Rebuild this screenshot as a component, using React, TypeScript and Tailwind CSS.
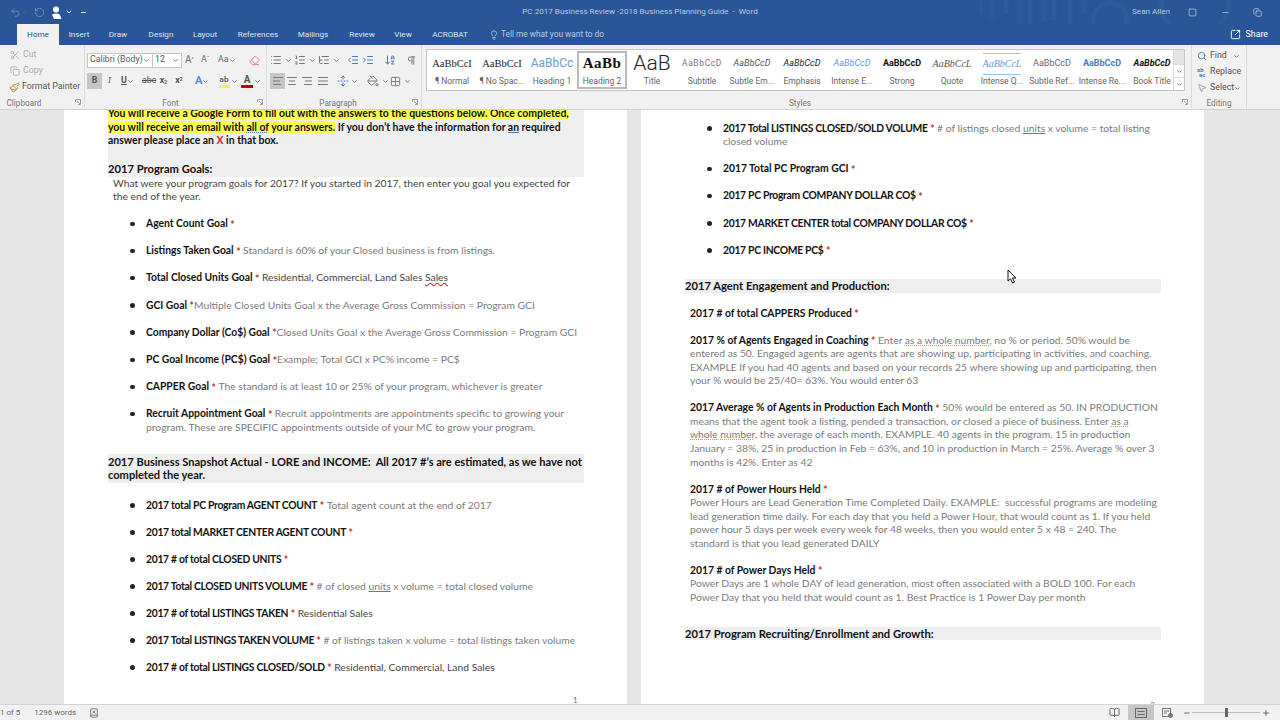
import type { ReactNode } from "react";
import {
  AlignCenter,
  AlignJustify,
  AlignLeft,
  AlignRight,
  ArrowDownAZ,
  BookOpen,
  BookX,
  ChevronDown,
  Copy,
  Eraser,
  Grid2x2,
  IndentDecrease,
  IndentIncrease,
  Lightbulb,
  List,
  ListOrdered,
  ListTree,
  Minus,
  MousePointer2,
  PaintBucket,
  Paintbrush,
  Pilcrow,
  Plus,
  RotateCcw,
  Scissors,
  Search,
  SquareArrowOutUpRight,
  Square,
  Undo2,
  UnfoldVertical,
} from "lucide-react";

const Star = () => <span className="relative top-[1.5px] text-[#c0392b]"> *</span>;
const Note = ({ children }: { children: ReactNode }) => <span className="font-normal text-[#7b7b7b]">{children}</span>;
const Dark = ({ children }: { children: ReactNode }) => <span className="font-normal text-[#444]">{children}</span>;
const Caps = ({ children }: { children: ReactNode }) => <span className="tracking-[-0.28px]">{children}</span>;

function Bullet({ mt = "mt-[13.6px]", children }: { mt?: string; children: ReactNode }) {
  return (
    <div className={`relative ml-[38px] whitespace-nowrap font-bold ${mt}`}>
      <span className="absolute left-[-16px] top-[4.5px] h-[4.5px] w-[4.5px] rounded-full bg-[#222]" />
      {children}
    </div>
  );
}

const Caret = () => <ChevronDown size={7} strokeWidth={3} className="text-[#666]" />;

function Tab({ className, children }: { className: string; children?: ReactNode }) {
  return <div className={`flex items-center justify-center ${className}`}>{children}</div>;
}

function Style({ sample, label, className, selected }: { sample: string; label: string; className: string; selected?: boolean }) {
  return (
    <div className={`flex h-[38px] w-[50px] shrink-0 flex-col items-center overflow-hidden border-[2px] ${selected ? "border-[#b9b9b9]" : "border-transparent"}`}>
      <div className={`flex h-[22px] items-center whitespace-nowrap ${className}`}>{sample}</div>
      <div className="whitespace-nowrap text-[8.5px] leading-[12px] text-[#666]">{label}</div>
    </div>
  );
}

function GroupLabel({ children, className = "right-0" }: { children: ReactNode; className?: string }) {
  return <div className={`absolute bottom-[-1px] left-0 text-center text-[8.2px] leading-[12px] text-[#777] ${className}`}>{children}</div>;
}

const Launcher = () => (
  <svg className="absolute bottom-[3px] right-[3px]" width="6" height="6" viewBox="0 0 6 6" fill="none" stroke="#888" strokeWidth="0.8">
    <path d="M0.500 3V0.500H5.500V5.500H3M2 2l3 3" />
  </svg>
);

export default function App() {
  return (
    <div className="flex h-[720px] w-[1280px] flex-col overflow-hidden bg-[#e6e6e6] font-['Lato',sans-serif] text-[10.32px] leading-[13.6px] text-[#111]">
      {/* title bar */}
      <div className="relative grid h-[24px] shrink-0 grid-cols-[1fr_auto_1fr] items-center bg-[#2a5596] font-['Roboto',sans-serif] text-[8.1px] text-[#b9cbe3]">
        <svg className="absolute right-[40px] top-0" width="260" height="45" viewBox="0 0 260 45" fill="none" stroke="#2e5b9d" strokeWidth="5">
          <circle cx="130" cy="20" r="17" />
          <circle cx="215" cy="2" r="34" />
          <path d="M0 0v14M12 0v18M26 0v14M40 0v24M50 0v26M64 0v22M74 0v20M90 0v26M104 0v14" />
        </svg>
        <div className="relative flex items-center">
          <div className="flex items-center text-[#6f8fbd]">
            <Undo2 size={11} className="ml-[10px]" />
            <Caret />
            <RotateCcw size={11} className="ml-[6px]" />
          </div>
          <div className="ml-[6px] flex items-center text-white">
            <svg width="12" height="13" viewBox="0 0 12 13" fill="currentColor"><circle cx="5" cy="3.500" r="3" /><path d="M1 9c1-2 7-2 8 0l1.500 4H3z" /></svg>
            <ChevronDown size={8} strokeWidth={3} className="ml-[2px]" />
            <Minus size={7} strokeWidth={3} className="ml-[7px]" />
          </div>
        </div>
        <div className="relative whitespace-nowrap">PC 2017 Business Review -2018 Business Planning Guide&nbsp; -&nbsp; Word</div>
        <div className="relative flex items-center justify-end pr-[18px]">
          <span className="whitespace-nowrap">Sean Allen</span>
          <Square size={9} className="ml-[18px]" />
          <Minus size={9} className="ml-[24px]" />
          <Copy size={9} className="ml-[23px]" />
        </div>
      </div>

      {/* tabs */}
      <div className="relative flex h-[21px] shrink-0 items-stretch bg-[#2a5596] font-['Roboto',sans-serif] text-[8.1px] text-[#dbe5f2]">
        <Tab className="w-[17px]" />
        <Tab className="w-[42px] bg-[#f1f1f1] text-[#2a5596]">Home</Tab>
        <Tab className="w-[40px]">Insert</Tab>
        <Tab className="w-[38px]">Draw</Tab>
        <Tab className="w-[48px]">Design</Tab>
        <Tab className="w-[40px]">Layout</Tab>
        <Tab className="w-[66px]">References</Tab>
        <Tab className="w-[44px]">Mailings</Tab>
        <Tab className="w-[54px]">Review</Tab>
        <Tab className="w-[28px]">View</Tab>
        <Tab className="w-[66px]">ACROBAT</Tab>
        <div className="ml-[6px] flex items-center gap-[2px] text-[8.3px] text-[#b9cbe3]">
          <Lightbulb size={10} />
          Tell me what you want to do
        </div>
        <div className="ml-auto mr-[12px] flex items-center gap-[5px] text-[8.8px] text-white">
          <SquareArrowOutUpRight size={11} />
          Share
        </div>
      </div>

      {/* ribbon */}
      <div className="flex h-[65px] shrink-0 border-b border-[#d0d0d0] bg-[#f1f1f1] pb-[1px] font-['Roboto',sans-serif] text-[8.8px] text-[#666]">
        <div className="relative w-[85px] shrink-0 border-r border-[#dcdcdc]">
          <div className="flex h-[16px] items-center pl-[10px] pt-[4px] text-[#aaa]"><Scissors size={10} className="mr-[3px]" />Cut</div>
          <div className="flex h-[16px] items-center pl-[10px] pt-[4px] text-[#aaa]"><Copy size={10} className="mr-[3px]" />Copy</div>
          <div className="flex h-[16px] items-center whitespace-nowrap pl-[9px] pt-[4px] text-[#555]"><Paintbrush size={11} className="mr-[2px] text-[#b8893a]" />Format Painter</div>
          <GroupLabel className="right-[36px]">Clipboard</GroupLabel>
          <Launcher />
        </div>

        <div className="relative w-[182px] shrink-0 border-r border-[#dcdcdc]">
          <div className="ml-[2px] mt-[7px] flex h-[16px] items-center">
            <div className="flex h-[15px] w-[66px] items-center justify-between border border-[#c6c6c6] bg-white px-[2px] text-[#555]">Calibri (Body)<Caret /></div>
            <div className="flex h-[15px] w-[29px] items-center justify-between border border-l-0 border-[#c6c6c6] bg-white px-[2px] text-[#555]">12<Caret /></div>
            <div className="w-[15px] pl-[3px] text-[10px]">A<sup className="text-[5px]">^</sup></div>
            <div className="w-[15px] pl-[4px] text-[9px]">A<sup className="text-[5px]">ˇ</sup></div>
            <div className="ml-[6px] flex w-[22px] items-center">Aa<Caret /></div>
            <Eraser size={11} className="ml-[9px] text-[#d97a8f]" />
          </div>
          <div className="ml-[2px] mt-[5px] flex h-[16px] items-center font-bold text-[#555]">
            <div className="flex h-[16px] w-[15px] items-center justify-center bg-[#c6c6c6]">B</div>
            <div className="w-[15px] text-center font-serif font-normal italic">I</div>
            <div className="flex w-[25px] items-center pl-[4px] underline">U<Caret /></div>
            <div className="w-[14px] text-center font-normal line-through">abc</div>
            <div className="w-[15px] text-center">x<sub className="text-[5px]">2</sub></div>
            <div className="w-[16px] text-center">x<sup className="text-[5px]">2</sup></div>
            <div className="ml-[8px] flex w-[22px] items-center text-[11px] text-[#5b8fd0]">A<Caret /></div>
            <div className="flex w-[14px] flex-col items-center"><span className="h-[10px] text-[8px] leading-[10px] text-[#666]">ab</span><span className="h-[3px] w-[11px] bg-[#f5f050]" /></div>
            <span className="w-[9px]"><Caret /></span>
            <div className="flex w-[14px] flex-col items-center"><span className="h-[10px] text-[10px] leading-[10px] text-[#555]">A</span><span className="h-[3px] w-[12px] bg-[#c00000]" /></div>
            <Caret />
          </div>
          <GroupLabel className="right-[10px]">Font</GroupLabel>
          <Launcher />
        </div>

        <div className="relative w-[155px] shrink-0 border-r border-[#dcdcdc]">
          <div className="ml-[3px] mt-[7px] flex h-[16px] items-center text-[#777]">
            <List size={12} /><span className="w-[12px] pl-[3px]"><Caret /></span>
            <ListOrdered size={12} /><span className="w-[12px] pl-[3px]"><Caret /></span>
            <ListTree size={12} /><span className="w-[17px] pl-[3px]"><Caret /></span>
            <IndentDecrease size={12} className="text-[#4a7ebb]" />
            <IndentIncrease size={12} className="ml-[3px] text-[#4a7ebb]" />
            <ArrowDownAZ size={12} className="ml-[10px] text-[#4a7ebb]" />
            <Pilcrow size={11} className="ml-[10px]" />
          </div>
          <div className="ml-[3px] mt-[5px] flex h-[16px] items-center text-[#777]">
            <div className="flex h-[16px] w-[15px] items-center justify-center bg-[#c6c6c6]"><AlignLeft size={12} /></div>
            <AlignCenter size={12} className="ml-[1px]" />
            <AlignRight size={12} className="ml-[3px]" />
            <AlignJustify size={12} className="ml-[4px]" />
            <UnfoldVertical size={12} className="ml-[8px] text-[#4a7ebb]" /><span className="w-[18px] pl-[2px]"><Caret /></span>
            <PaintBucket size={12} /><span className="w-[11px] pl-[3px]"><Caret /></span>
            <Grid2x2 size={11} /><span className="pl-[3px]"><Caret /></span>
          </div>
          <GroupLabel className="right-[12px]">Paragraph</GroupLabel>
          <Launcher />
        </div>

        <div className="relative w-[770px] shrink-0 border-r border-[#dcdcdc]">
          <div className="ml-[4px] mt-[4px] flex h-[42px] w-[759px] border border-[#c6c6c6] bg-white">
            <div className="flex w-[746px] items-center">
              <Style sample="AaBbCcI" label="¶ Normal" className="font-['Liberation_Serif',serif] text-[10.5px] text-[#222]" />
              <Style sample="AaBbCcI" label="¶ No Spac..." className="font-['Liberation_Serif',serif] text-[10.5px] text-[#222]" />
              <Style sample="AaBbCc" label="Heading 1" className="text-[12px] text-[#6d9bcf]" />
              <Style sample="AaBb" label="Heading 2" className="font-['Liberation_Serif',serif] text-[15px] font-bold tracking-[0.5px] text-[#111]" selected />
              <Style sample="AaB" label="Title" className="pb-[2px] text-[21px] font-light leading-[20px] text-[#222]" />
              <Style sample="AaBbCcD" label="Subtitle" className="text-[8.5px] tracking-[0.6px] text-[#777]" />
              <Style sample="AaBbCcD" label="Subtle Em..." className="text-[9px] italic text-[#555]" />
              <Style sample="AaBbCcD" label="Emphasis" className="text-[9px] italic text-[#222]" />
              <Style sample="AaBbCcD" label="Intense E..." className="text-[9px] italic text-[#5b9bd5]" />
              <Style sample="AaBbCcD" label="Strong" className="text-[9px] font-bold text-[#111]" />
              <Style sample="AaBbCcL" label="Quote" className="font-['Liberation_Serif',serif] text-[10px] italic text-[#555]" />
              <Style sample="AaBbCcL" label="Intense Q..." className="border-y border-[#9dc3e6] font-['Liberation_Serif',serif] text-[10px] italic text-[#5b9bd5]" />
              <Style sample="AaBbCcD" label="Subtle Ref..." className="text-[9px] text-[#666]" />
              <Style sample="AaBbCcD" label="Intense Re..." className="text-[9px] font-bold text-[#4a7ebb]" />
              <Style sample="AaBbCcD" label="Book Title" className="text-[9px] font-bold italic text-[#111]" />
            </div>
            <div className="flex w-[12px] flex-col border-l border-[#d8d8d8] text-[#666]">
              <div className="flex h-[14px] items-center justify-center bg-[#e4e4e4]" />
              <div className="flex h-[14px] items-center justify-center border-y border-[#d8d8d8]"><Caret /></div>
              <div className="flex h-[12px] items-center justify-center"><Caret /></div>
            </div>
          </div>
          <GroupLabel className="right-[13px]">Styles</GroupLabel>
          <Launcher />
        </div>

        <div className="relative w-[55px] shrink-0 border-r border-[#dcdcdc]">
          <div className="mt-[3px] flex h-[16px] items-center whitespace-nowrap pl-[5px] text-[#555]"><Search size={10} className="mr-[3px] text-[#4a7ebb]" />Find<span className="ml-[6px]"><Caret /></span></div>
          <div className="flex h-[16px] items-center whitespace-nowrap pl-[5px] text-[#555]">
            <span className="mr-[3px] flex w-[10px] flex-col text-[6px] font-bold leading-[5px] text-[#4a7ebb]"><span>ab</span><span className="pl-[2px]">ac</span></span>
            Replace
          </div>
          <div className="flex h-[16px] items-center whitespace-nowrap pl-[5px] text-[#555]"><MousePointer2 size={10} className="mr-[3px] text-[#999]" />Select<Caret /></div>
          <GroupLabel>Editing</GroupLabel>
        </div>
      </div>

      {/* document */}
      <div className="relative flex min-h-0 flex-1 gap-[14px] overflow-hidden pl-[64px]">
        <div className="relative h-full w-[563px] shrink-0 overflow-hidden bg-white pl-[44px] pr-[43px]">
          <div className="-mt-[3px] bg-[#eeeeee] font-bold">
            <div className="whitespace-nowrap text-[10.45px]">
              <span className="bg-[#ffff4d]">You will receive a Google Form to fill out with the answers to the questions below. Once completed,</span>
              <br />
              <span className="bg-[#ffff4d]">you will receive an email with <span className="underline decoration-[#4a7ebb] decoration-dotted">all of</span> your answers.</span> If you don’t have the information for <span className="underline decoration-[#4a7ebb]">an</span> required
              <br />
              answer please place an <span className="text-[#e02020]">X</span> in that box.
            </div>
            <div className="mt-[14.5px] pb-[1px] text-[11.2px]">2017 Program Goals:</div>
          </div>
          <div className="ml-[5px] whitespace-nowrap text-[#444]">
            What were your program goals for 2017? If you started in 2017, then enter you goal you expected for
            <br />
            the end of the year.
          </div>
          <Bullet mt="mt-[13px]">Agent Count Goal<Star /></Bullet>
          <Bullet>Listings Taken Goal<Star /> <Note>Standard is 60% of your Closed business is from listings.</Note></Bullet>
          <Bullet>Total Closed Units Goal<Star /> <Dark>Residential, Commercial, Land Sales <span className="underline decoration-[#e02020] decoration-wavy">Sales</span></Dark></Bullet>
          <Bullet>GCI Goal<Star /><Note>Multiple Closed Units Goal x the Average Gross Commission = Program GCI</Note></Bullet>
          <Bullet>Company Dollar (Co$) Goal<Star /><Note>Closed Units Goal x the Average Gross Commission = Program GCI</Note></Bullet>
          <Bullet>PC Goal Income (PC$) Goal<Star /><Note>Example; Total GCI x PC% income = PC$</Note></Bullet>
          <Bullet>CAPPER Goal<Star /> <Note>The standard is at least 10 or 25% of your program, whichever is greater</Note></Bullet>
          <Bullet>
            Recruit Appointment Goal<Star /> <Note>Recruit appointments are appointments specific to growing your<br />program. These are SPECIFIC appointments outside of your MC to grow your program.</Note>
          </Bullet>
          <div className="mt-[19px] whitespace-nowrap bg-[#eeeeee] py-[1px] text-[11.1px] font-bold">
            2017 Business Snapshot Actual - LORE and INCOME:&nbsp; All 2017 #’s are estimated, as we have not
            <br />
            completed the year.
          </div>
          <Bullet mt="mt-[16px]"><Caps>2017 total PC Program AGENT COUNT</Caps><Star /> <Note>Total agent count at the end of 2017</Note></Bullet>
          <Bullet mt="mt-[13.4px]"><Caps>2017 total MARKET CENTER AGENT COUNT</Caps><Star /></Bullet>
          <Bullet mt="mt-[13.4px]"><Caps>2017 # of total CLOSED UNITS</Caps><Star /></Bullet>
          <Bullet mt="mt-[13.4px]"><Caps>2017 Total CLOSED UNITS VOLUME</Caps><Star /> <Note># of closed <span className="underline decoration-[#4a7ebb]">units</span> x volume = total closed volume</Note></Bullet>
          <Bullet mt="mt-[13.4px]"><Caps>2017 # of total LISTINGS TAKEN</Caps><Star /> <Dark>Residential Sales</Dark></Bullet>
          <Bullet mt="mt-[13.4px]"><Caps>2017 Total LISTINGS TAKEN VOLUME</Caps><Star /> <Note># of listings taken x volume = total listings taken volume</Note></Bullet>
          <Bullet mt="mt-[13.4px]"><Caps>2017 # of total LISTINGS CLOSED/SOLD</Caps><Star /> <Dark>Residential, Commercial, Land Sales</Dark></Bullet>
          <div className="absolute bottom-0 left-[509px] text-[8px] leading-[8px] text-[#777]">1</div>
        </div>

        <div className="relative h-full w-[563px] shrink-0 overflow-hidden bg-white pl-[44px] pr-[43px] pt-[11.500px]">
          <Bullet mt="mt-0">
            <Caps>2017 Total LISTINGS CLOSED/SOLD VOLUME</Caps><Star /> <Note># of listings closed <span className="underline decoration-[#4a7ebb]">units</span> x volume = total listing<br />closed volume</Note>
          </Bullet>
          <Bullet>2017 Total PC Program GCI<Star /></Bullet>
          <Bullet><Caps>2017 PC Program COMPANY DOLLAR CO$</Caps><Star /></Bullet>
          <Bullet><Caps>2017 MARKET CENTER total COMPANY DOLLAR CO$</Caps><Star /></Bullet>
          <Bullet><Caps>2017 PC INCOME PC$</Caps><Star /></Bullet>
          <div className="mt-[21.5px] bg-[#eeeeee] text-[11.2px] font-bold">2017 Agent Engagement and Production:</div>
          <div className="ml-[5px] mt-[14px] whitespace-nowrap">
            <div className="font-bold">2017 # of total CAPPERS Produced<Star /></div>
            <div className="mt-[13.4px]">
              <span className="font-bold">2017 % of Agents Engaged in Coaching<Star /></span> <Note>Enter <span className="underline decoration-[#c9a227] decoration-dotted">as a whole number</span>, no % or period. 50% would be<br />entered as 50. Engaged agents are agents that are showing up, participating in activities, and coaching.<br />EXAMPLE If you had 40 agents and based on your records 25 where showing up and participating, then<br />your % would be 25/40= 63%. You would enter 63</Note>
            </div>
            <div className="mt-[13.4px]">
              <span className="font-bold">2017 Average % of Agents in Production Each Month<Star /></span> <Note>50% would be entered as 50. IN PRODUCTION<br />means that the agent took a listing, pended a transaction, or closed a piece of business. Enter <span className="underline decoration-[#c9a227] decoration-dotted">as a</span><br /><span className="underline decoration-[#c9a227] decoration-dotted">whole number</span>, the average of each month. EXAMPLE. 40 agents in the program. 15 in production<br />January = 38%, 25 in production in Feb = 63%, and 10 in production in March = 25%. Average % over 3<br />months is 42%. Enter as 42</Note>
            </div>
            <div className="mt-[13.4px]">
              <span className="font-bold">2017 # of Power Hours Held<Star /></span>
              <br />
              <Note>Power Hours are Lead Generation Time Completed Daily. EXAMPLE:&nbsp; successful programs are modeling<br />lead generation time daily. For each day that you held a Power Hour, that would count as 1. If you held<br />power hour 5 days per week every week for 48 weeks, then you would enter 5 x 48 = 240. The<br />standard is that you lead generated DAILY</Note>
            </div>
            <div className="mt-[13.200px]">
              <span className="font-bold">2017 # of Power Days Held<Star /></span>
              <br />
              <Note>Power Days are 1 whole DAY of lead generation, most often associated with a BOLD 100. For each<br />Power Day that you held that would count as 1. Best Practice is 1 Power Day per month</Note>
            </div>
          </div>
          <div className="mt-[22px] bg-[#eeeeee] text-[11.2px] font-bold">2017 Program Recruiting/Enrollment and Growth:</div>
          <div className="absolute bottom-0 left-[509px] h-[4px] overflow-hidden text-[8px] leading-[10px] text-[#777]">2</div>
        </div>

        <svg className="absolute left-[1007px] top-[159px]" width="10" height="15" viewBox="0 0 10 15">
          <path d="M1 1v11l2.500-2.200L5.500 14l2-.9-2-4.100H9z" fill="#fff" stroke="#111" strokeWidth="1" />
        </svg>
      </div>

      {/* status bar */}
      <div className="relative flex h-[16px] shrink-0 items-center border-t border-[#d2d2d2] bg-[#f1f1f1] font-['Roboto',sans-serif] text-[8px] text-[#666]">
        <span className="whitespace-nowrap">1 of 5</span>
        <span className="ml-[14px] whitespace-nowrap">1296 words</span>
        <BookX size={10} className="ml-[13px]" />
        <div className="ml-auto flex h-full items-center">
          <BookOpen size={11} className="mr-[8px]" />
          <div className="flex h-full w-[26px] items-center justify-center bg-[#c6c6c6]">
            <svg width="12" height="10" viewBox="0 0 12 10" fill="none" stroke="#666"><rect x="0.500" y="0.500" width="11" height="9" /><path d="M2.500 3.500h7M2.500 6.500h7" /></svg>
          </div>
          <svg className="ml-[8px]" width="11" height="10" viewBox="0 0 11 10" fill="none" stroke="#777"><rect x="0.500" y="0.500" width="8" height="8" /><path d="M2 3h5M2 5h3" /><circle cx="8.500" cy="7.500" r="2" fill="#777" /></svg>
          <Minus size={8} strokeWidth={3} className="ml-[10px]" />
          <div className="relative ml-[1px] h-[1px] w-[68px] bg-[#bbb]">
            <span className="absolute left-[33px] top-[-4px] h-[9px] w-[3px] bg-[#666]" />
          </div>
          <Plus size={8} strokeWidth={3} className="ml-[2px] mr-[10px]" />
        </div>
      </div>
    </div>
  );
}
